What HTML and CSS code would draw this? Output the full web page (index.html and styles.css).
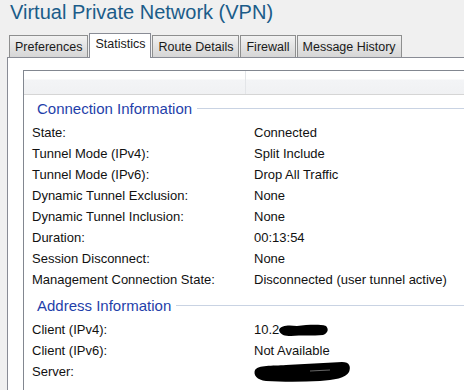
FILE: index.html
```html
<!DOCTYPE html>
<html lang="en">
<head>
    <meta charset="UTF-8">
    <title>Virtual Private Network (VPN)</title>
    <link rel="stylesheet" href="styles.css">
</head>
<body>
    <h1 class="title">Virtual Private Network (VPN)</h1>

    <div class="tabs">
        <div class="tab">Preferences</div>
        <div class="tab active">Statistics</div>
        <div class="tab">Route Details</div>
        <div class="tab">Firewall</div>
        <div class="tab">Message History</div>
    </div>

    <div class="panel">
        <div class="listview">
            <div class="lv-header">
                <div class="lv-col first"></div>
                <div class="lv-col"></div>
            </div>

            <div class="section">
                <div class="section-title"><span>Connection Information</span></div>
                <div class="row"><span class="label">State:</span><span class="value">Connected</span></div>
                <div class="row"><span class="label">Tunnel Mode (IPv4):</span><span class="value">Split Include</span></div>
                <div class="row"><span class="label">Tunnel Mode (IPv6):</span><span class="value">Drop All Traffic</span></div>
                <div class="row"><span class="label">Dynamic Tunnel Exclusion:</span><span class="value">None</span></div>
                <div class="row"><span class="label">Dynamic Tunnel Inclusion:</span><span class="value">None</span></div>
                <div class="row"><span class="label">Duration:</span><span class="value">00:13:54</span></div>
                <div class="row"><span class="label">Session Disconnect:</span><span class="value">None</span></div>
                <div class="row"><span class="label">Management Connection State:</span><span class="value">Disconnected (user tunnel active)</span></div>
            </div>

            <div class="section second">
                <div class="section-title"><span>Address Information</span></div>
                <div class="row">
                    <span class="label">Client (IPv4):</span>
                    <span class="value">10.2<svg class="scribble" width="52" height="14" viewBox="0 0 52 14">
                        <path d="M2 7 C4 2 12 2 20 3 C30 2 42 1 49 3 C52 6 51 10 46 12 C36 13 24 12 14 13 C8 13 3 12 2 7 Z" fill="#000"/>
                    </svg></span>
                </div>
                <div class="row"><span class="label">Client (IPv6):</span><span class="value">Not Available</span></div>
                <div class="row">
                    <span class="label">Server:</span>
                    <span class="value"><svg class="scribble server" width="100" height="21" viewBox="0 0 100 21">
                        <path d="M3 9 C6 4 20 5 34 4 C52 3 72 2 90 1 C98 1 99 6 97 11 C94 17 82 19 68 20 C50 21 30 21 14 20 C5 19 1 14 3 9 Z" fill="#000"/>
                        <path d="M58 10 L78 9" stroke="#666" stroke-width="1"/>
                    </svg></span>
                </div>
            </div>
        </div>
    </div>
</body>
</html>
```

FILE: styles.css
```css
html, body {
    margin: 0;
    height: 100%;
    overflow: hidden;
}
body {
    font-family: "Liberation Sans", Arial, sans-serif;
    background-color: #f0f0f0;
    color: #111;
    display: flex;
    flex-direction: column;
}

.title {
    margin: 0;
    padding: 0 0 0 10px;
    height: 33px;
    font-size: 20px;
    font-weight: normal;
    color: #1b5c89;
    line-height: 24px;
    flex: none;
}

.tabs {
    display: flex;
    align-items: flex-end;
    padding-left: 9px;
    gap: 1px;
    height: 24px;
    flex: none;
    position: relative;
    z-index: 1;
}
.tab {
    height: 21px;
    line-height: 22px;
    padding: 0 5px;
    font-size: 12.5px;
    color: #1a1a1a;
    border: 1px solid #8e8f8f;
    border-bottom: none;
    background: linear-gradient(#f2f2f2, #e3e3e3 50%, #d6d6d6);
}
.tab.active {
    height: 24px;
    line-height: 21px;
    background: #fff;
    border-color: #898c95;
    margin-bottom: -1px;
    padding: 0 5px;
}

.panel {
    flex: 1;
    margin-left: 7px;
    background: #fff;
    border: 1px solid #898c95;
    border-right: none;
    border-bottom: none;
    padding: 12px 0 0 15px;
    display: flex;
    flex-direction: column;
}

.listview {
    flex: 1;
    border: 1px solid #828790;
    border-right: none;
    border-bottom: none;
    background: #fff;
}
.lv-header {
    display: flex;
    height: 23px;
    border-bottom: 1px solid #d5d5d5;
    background: linear-gradient(#fff 0, #fff 8px, #f3f4f6 9px, #f0f1f3);
}
.lv-col {
    flex: 1;
}
.lv-col.first {
    flex: 0 0 221px;
    border-right: 1px solid #e3e5e8;
}

.section {
    padding-top: 2px;
}
.section.second {
    padding-top: 4px;
}
.section-title {
    display: flex;
    align-items: center;
    height: 22px;
    padding-left: 13px;
    margin-bottom: 3px;
    font-size: 15px;
    color: #1f3faa;
}
.section-title::after {
    content: "";
    flex: 1;
    height: 1px;
    margin-left: 5px;
    background: #c9d3e3;
}

.row {
    display: flex;
    align-items: center;
    height: 21px;
    padding-left: 8px;
    font-size: 13px;
}
.label {
    flex: 0 0 222px;
}
.value {
    display: flex;
    align-items: center;
}
.scribble {
    display: block;
    margin-left: -2px;
}
.scribble.server {
    margin-top: 0;
}
```
